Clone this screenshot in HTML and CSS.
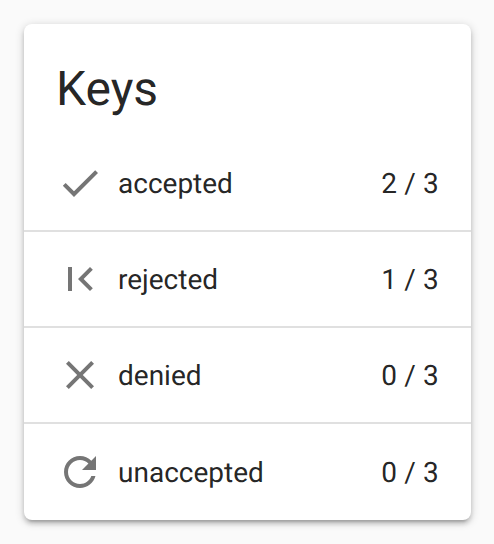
FILE: index.html
```html
<!DOCTYPE html>
<html lang="en">
<head>
<meta charset="utf-8">
<title>Keys</title>
<link rel="stylesheet" href="styles.css">
</head>
<body>
<section class="card">
<h1 class="title">Keys</h1>
<ul class="list">
<li class="row"><svg class="icon" viewBox="0 0 24 24"><path d="M9 16.17L4.83 12l-1.42 1.41L9 19 21 7l-1.41-1.41z"/></svg><span class="label">accepted</span><span class="count">2 / 3</span></li>
<li class="row"><svg class="icon" viewBox="0 0 24 24"><path d="M18.41 16.59L13.82 12l4.59-4.59L17 6l-6 6 6 6zM6 6h2v12H6z"/></svg><span class="label">rejected</span><span class="count">1 / 3</span></li>
<li class="row"><svg class="icon" viewBox="0 0 24 24"><path d="M19 6.41L17.59 5 12 10.59 6.41 5 5 6.41 10.59 12 5 17.59 6.41 19 12 13.41 17.59 19 19 17.59 13.41 12z"/></svg><span class="label">denied</span><span class="count">0 / 3</span></li>
<li class="row"><svg class="icon" viewBox="0 0 24 24"><path d="M17.65 6.35C16.2 4.9 14.21 4 12 4c-4.42 0-7.99 3.58-7.99 8s3.57 8 7.99 8c3.73 0 6.84-2.55 7.73-6h-2.08c-.82 2.33-3.04 4-5.65 4-3.31 0-6-2.69-6-6s2.69-6 6-6c1.66 0 3.14.69 4.22 1.78L13 11h7V4z"/></svg><span class="label">unaccepted</span><span class="count">0 / 3</span></li>
</ul>
</section>
</body>
</html>
```
FILE: styles.css
```css
* {
  box-sizing: border-box;
}

body {
  margin: 0;
  padding: 24px 23px 24px 24px;
  background: #fafafa;
  color: rgba(0, 0, 0, 0.87);
  font-family: Roboto, sans-serif;
  text-rendering: geometricPrecision;
}

.card {
  height: 496px;
  padding-top: 33px;
  background: #fff;
  border-radius: 8px;
  box-shadow: 0 2px 10px rgba(0, 0, 0, 0.2), 0 4px 4px rgba(0, 0, 0, 0.14), 0 6px 2px -4px rgba(0, 0, 0, 0.12);
}

.title {
  margin: 0;
  padding: 0 32px;
  font-size: 48px;
  font-weight: 400;
  line-height: 64px;
}

.list {
  margin: 15px 0 0;
  padding: 0;
  list-style: none;
}

.row {
  display: flex;
  align-items: center;
  height: 96px;
  padding: 0 32px;
  border-bottom: 2px solid #e0e0e0;
  font-size: 28px;
}

.row:last-child {
  border-bottom: 0;
}

.icon {
  width: 48px;
  height: 48px;
  margin-right: 14px;
  fill: #757575;
}

.label {
  flex: 1;
}

.count {
  letter-spacing: 0.15px;
}
```
